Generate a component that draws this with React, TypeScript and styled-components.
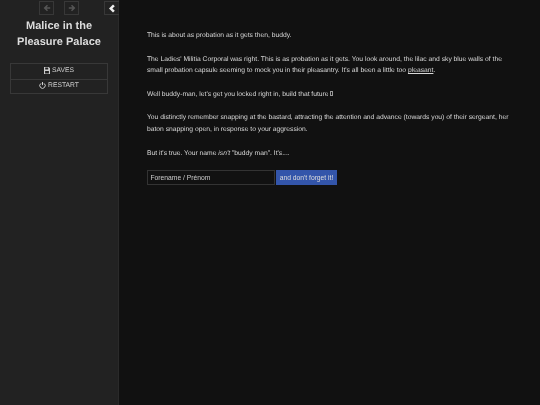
import React from "react";
import styled, { createGlobalStyle } from "styled-components";

const Global = createGlobalStyle`
  html, body { margin: 0; padding: 0; height: 100%; background: #111; }
  #root { height: 100%; }
  * { box-sizing: border-box; }
`;
const Page = styled.div`
  display: flex; width: 540px; height: 405px; overflow: hidden;
  background: #111; color: #d8d8d8;
  font: 6.74px/11.76px "Liberation Sans", Arial, sans-serif;
  text-rendering: geometricPrecision;
  filter: blur(0.25px);
`;
const Sidebar = styled.aside`
  width: 119px; flex: none; background: #222; border-right: 1px solid #2a2a2a;
  display: flex; flex-direction: column;
`;
const Toolbar = styled.div`
  display: flex; height: 15px; padding: 1px 0 0 39px;
`;
const HistoryButton = styled.button`
  width: 15px; height: 14px; padding: 0; margin-right: 10px; background: transparent;
  border: 1px solid #383838; color: #555; display: flex; align-items: center; justify-content: center;
`;
const ToggleButton = styled(HistoryButton)`
  margin: 0 -1px 0 auto; width: 15px; color: #eee; border-right: 0;
`;
const Title = styled.h1`
  margin: 3px 0 0; font-size: 11px; line-height: 16px; font-weight: 700; color: #ddd; text-align: center;
`;
const Menu = styled.nav`
  margin: 13px 10px 0; border: 1px solid #383838; display: flex; flex-direction: column;
`;
const MenuItem = styled.a`
  height: 14.5px; display: flex; align-items: center; justify-content: center; gap: 2px;
  color: #ccc; font-size: 6.74px; text-transform: uppercase;
  & + & { border-top: 1px solid #383838; }
  svg { margin-top: -1px; }
`;
const Passage = styled.main`
  flex: 1; min-width: 0; padding: 30px 28px 0;
`;
const Para = styled.p`
  margin: 0 0 11.76px;
`;
const Underlined = styled.span`
  text-decoration: underline;
`;
const Tofu = styled.span`
  display: inline-block; width: 3px; height: 5px; border: 0.5px solid #999; vertical-align: -0.5px;
`;
const Form = styled.div`
  display: flex; gap: 1px; margin-top: -1px;
`;
const NameInput = styled.input`
  width: 128px; height: 14.5px; padding: 0 2.5px; background: transparent; color: #ccc;
  border: 1px solid #333; font: 6.74px "Liberation Sans", Arial, sans-serif; outline: none;
  &::placeholder { color: #ccc; opacity: 1; }
`;
const Submit = styled.button`
  height: 14.5px; width: 61px; padding: 0; border: 0; background: #35a; white-space: nowrap;
  color: #ddd; font: 6.74px "Liberation Sans", Arial, sans-serif;
`;

const Arrow = ({ right }: { right?: boolean }) => (
  <svg width="8" height="8" viewBox="0 0 8 8" fill="currentColor">
    <path d={right ? "M4 0.8 7.4 4 4 7.2 3 6.2 4.4 4.8H.8V3.2H4.4L3 1.8Z" : "M4 0.8.6 4 4 7.2 5 6.2 3.6 4.8H7.2V3.2H3.6L5 1.8Z"} />
  </svg>
);
const Chevron = () => (
  <svg width="8" height="9" viewBox="0 0 8 9" fill="currentColor">
    <path d="M5 .6 6.8 2.2 4.4 4.5 6.8 6.8 5 8.4 1 4.5Z" />
  </svg>
);
const SaveIcon = () => (
  <svg width="6" height="7" viewBox="0 0 6 7" fill="currentColor">
    <path fillRule="evenodd" d="M0 0H4.8L6 1.2V7H0ZM1.2.6V2.6H4.2V.6ZM1.1 4V6.4H4.9V4Z" />
  </svg>
);
const PowerIcon = () => (
  <svg width="7" height="7" viewBox="0 0 7 7" fill="none" stroke="currentColor" strokeWidth="1">
    <path d="M2 1.4A2.7 2.7 0 1 0 5 1.4M3.5 0V3.2" />
  </svg>
);

export default function App() {
  return (
    <Page>
      <Global />
      <Sidebar>
        <Toolbar>
          <HistoryButton><Arrow /></HistoryButton>
          <HistoryButton><Arrow right /></HistoryButton>
          <ToggleButton><Chevron /></ToggleButton>
        </Toolbar>
        <Title>Malice in the<br />Pleasure Palace</Title>
        <Menu>
          <MenuItem><SaveIcon /> Saves</MenuItem>
          <MenuItem><PowerIcon /> Restart</MenuItem>
        </Menu>
      </Sidebar>
      <Passage>
        <Para>This is about as probation as it gets then, buddy.</Para>
        <Para>The Ladies' Militia Corporal was right. This is as probation as it gets. You look around, the lilac and sky blue walls of the small probation capsule seeming to mock you in their pleasantry. It's all been a little too <Underlined>pleasant</Underlined>.</Para>
        <Para>Well buddy-man, let's get you locked right in, build that future <Tofu /></Para>
        <Para>You distinctly remember snapping at the bastard, attracting the attention and advance (towards you) of their sergeant, her baton snapping open, in response to your aggression.</Para>
        <Para>But it's true. Your name <em>isn't</em> "buddy man". It's....</Para>
        <Form>
          <NameInput placeholder="Forename / Prénom" />
          <Submit>and don't forget it!</Submit>
        </Form>
      </Passage>
    </Page>
  );
}
